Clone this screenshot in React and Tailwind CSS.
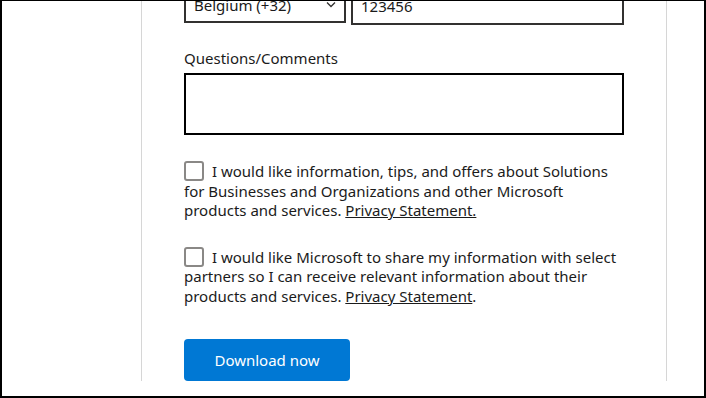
export default function App() {
  const font = { fontFamily: '"Noto Sans", "Open Sans", sans-serif' };
  return (
    <div
      className="w-[706px] h-[398px] overflow-hidden bg-white border-l-2 border-r-2 border-t border-b-2 border-black text-[15px] text-[#1b1b1b]"
      style={font}
    >
      <div className="ml-[139px] w-[526px] h-full border-l border-r border-[#d6d6d6] pl-[42px] pr-[42px]">
        {/* phone row */}
        <div className="flex items-start gap-[5px] mt-[-15px]">
          <div className="w-[162px] h-[37px] border-2 border-[#323130] flex items-center justify-between pl-[8px] pr-[8px]">
            <span className="leading-[20px]">Belgium (+32)</span>
            <svg width="10" height="7" viewBox="0 0 10 7" fill="none">
              <path d="M1 1.5l4 4 4-4" stroke="#323130" strokeWidth="1.3" />
            </svg>
          </div>
          <div className="flex-1 h-[39px] border-2 border-[#323130] flex items-center pl-[8px]">
            <span className="leading-[20px]">123456</span>
          </div>
        </div>

        <div className="mt-[23px] leading-[20px]">Questions/Comments</div>
        <div className="mt-[5px] h-[62px] border-2 border-black" />

        <p className="mt-[26px] leading-[19.5px]">
          <span className="inline-block w-[20px] h-[20px] border-2 border-[#8a8886] rounded-[3px] mr-[8px] align-[-4px]" />
          I would like information, tips, and offers about Solutions for Businesses and Organizations and other Microsoft products and services.{" "}
          <a className="underline">Privacy Statement.</a>
        </p>

        <p className="mt-[26px] leading-[19.5px]">
          <span className="inline-block w-[20px] h-[20px] border-2 border-[#8a8886] rounded-[3px] mr-[8px] align-[-4px]" />
          I would like Microsoft to share my information with select partners so I can receive relevant information about their products and services.{" "}
          <a className="underline">Privacy Statement</a>.
        </p>

        <button className="mt-[33px] w-[166px] h-[42px] rounded-[4px] bg-[#0078d4] text-white text-[15px] leading-[20px]">
          Download now
        </button>
      </div>
    </div>
  );
}
